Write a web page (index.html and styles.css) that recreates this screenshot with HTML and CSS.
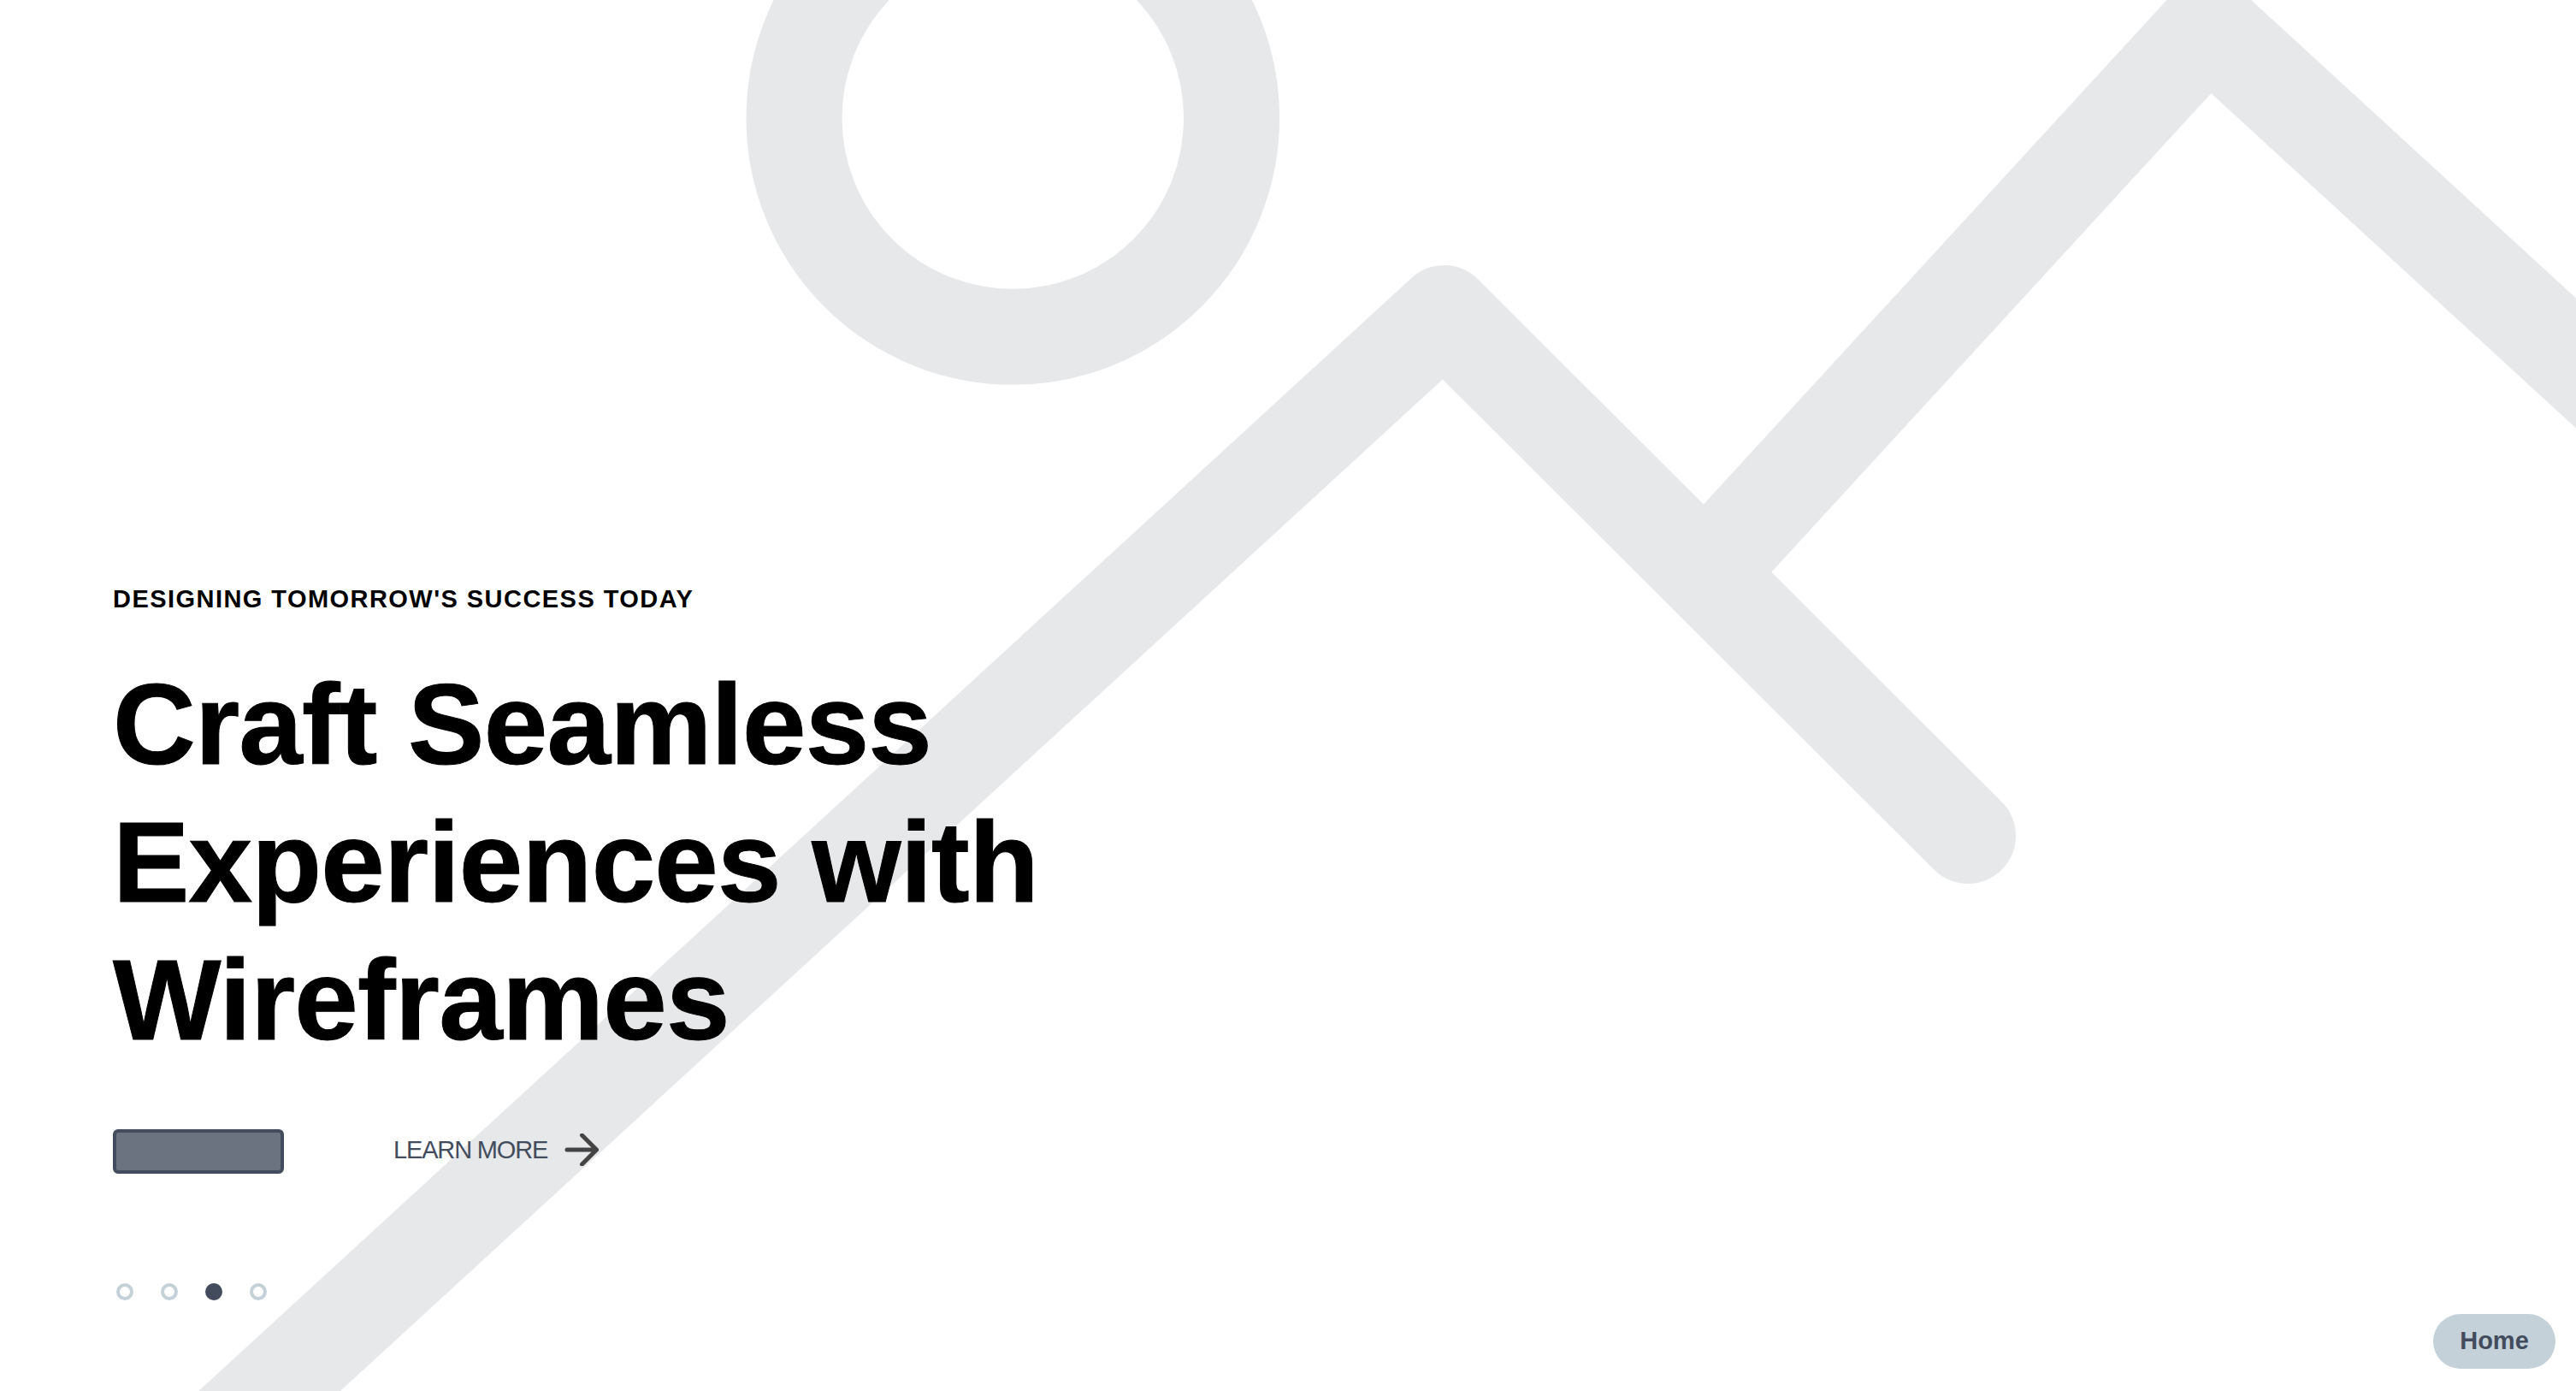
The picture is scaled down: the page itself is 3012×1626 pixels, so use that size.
FILE: index.html
```html
<!DOCTYPE html>
<html lang="en">
<head>
<meta charset="utf-8">
<title>Craft Seamless Experiences with Wireframes</title>
<link rel="stylesheet" href="styles.css">
</head>
<body>
<main class="hero">
  <svg class="hero-art" viewBox="0 0 3012 1626" aria-hidden="true">
    <circle cx="1184.3" cy="138" r="255.8"></circle>
    <path d="M144 1783 L1688.5 366 L2301 977"></path>
    <path d="M1994 670 L2582 30 L3200 597"></path>
  </svg>
  <div class="hero-content">
    <p class="eyebrow">DESIGNING TOMORROW'S SUCCESS TODAY</p>
    <h1 class="headline">Craft Seamless<br>Experiences with<br>Wireframes</h1>
    <div class="actions">
      <button class="btn-primary" type="button" aria-label="Get started"></button>
      <a class="btn-link" href="#">
        <span>LEARN MORE</span>
        <svg class="arrow" viewBox="0 0 40 38" aria-hidden="true"><path d="M3 19 H37.5 M20.5 2 L37.5 19 L20.5 36"></path></svg>
      </a>
    </div>
    <div class="dots">
      <span class="dot"></span>
      <span class="dot"></span>
      <span class="dot dot-active"></span>
      <span class="dot"></span>
    </div>
  </div>
  <a class="home-pill" href="#">Home</a>
</main>
</body>
</html>
```
FILE: styles.css
```css
* { box-sizing: border-box; }
html, body { margin: 0; height: 100%; }
body { background: #fff; font-family: "Liberation Sans", Arial, sans-serif; overflow: hidden; }
.hero { position: relative; width: 100%; height: 1626px; overflow: hidden; }
.hero-art { display: block; position: absolute; inset: 0; width: 3012px; height: 1626px; fill: none; stroke: #e7e8ea; stroke-width: 112; stroke-linecap: round; stroke-linejoin: round; }
.hero-content { position: relative; padding: 682px 0 0 132px; display: flex; flex-direction: column; align-items: flex-start; }
.eyebrow { margin: 0; font-size: 29px; line-height: 36px; font-weight: 700; letter-spacing: 1.45px; color: #000; }
.headline { margin: 48px 0 0; font-size: 134px; line-height: 161px; font-weight: 700; letter-spacing: -0.8px; color: #000; -webkit-text-stroke: 1px #000; }
.actions { display: flex; align-items: center; gap: 128px; margin-top: 71px; }
.btn-primary { width: 200px; height: 52px; padding: 0; background: #6b7280; border: 4px solid #434c5c; border-radius: 6px; }
.btn-link { display: flex; align-items: center; gap: 20px; margin-bottom: 4px; font-size: 29px; letter-spacing: -1.15px; color: #434c5c; text-decoration: none; }
.arrow { width: 40px; height: 38px; fill: none; stroke: #444; stroke-width: 5; stroke-linecap: round; stroke-linejoin: round; }
.dots { display: flex; gap: 32px; margin: 128px 0 0 4px; }
.dot { width: 20px; height: 20px; border-radius: 50%; border: 4px solid #c5d1d9; }
.dot-active { background: #434c5c; border-color: #434c5c; }
.home-pill { position: absolute; right: 24px; bottom: 26px; height: 64px; width: 143px; display: flex; align-items: center; justify-content: center; padding-bottom: 2px; border-radius: 32px; background: #c5d1d9; color: #434c5c; font-size: 29px; font-weight: 700; text-decoration: none; }
```
